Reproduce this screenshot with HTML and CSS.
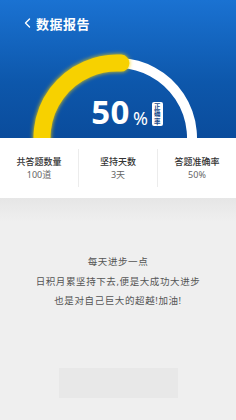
FILE: index.html
```html
<!DOCTYPE html>
<html lang="zh-CN">
<head>
    <meta charset="UTF-8">
    <meta name="viewport" content="width=device-width, initial-scale=1.0">
    <title>数据报告</title>
    <link rel="stylesheet" href="styles.css">
</head>
<body>
    <div class="page">
        <header class="report-header">
            <div class="title-bar">
                <svg class="back" width="7" height="10" viewBox="0 0 7 10">
                    <path d="M5.5 1 L1.5 5 L5.5 9" fill="none" stroke="#fff" stroke-width="1.4" stroke-linecap="round" stroke-linejoin="round"/>
                </svg>
                <h1>数据报告</h1>
            </div>
            <div class="gauge">
                <svg class="gauge-arc" width="236" height="106" viewBox="0 0 236 106">
                    <defs>
                        <filter id="glow" x="-20%" y="-20%" width="140%" height="140%">
                            <feGaussianBlur stdDeviation="2" result="b"/>
                            <feMerge>
                                <feMergeNode in="b"/>
                                <feMergeNode in="SourceGraphic"/>
                            </feMerge>
                        </filter>
                    </defs>
                    <path d="M120.9 31.1 A75 75 0 0 1 187.5 131.6" fill="none" stroke="#ffffff" stroke-width="10"/>
                    <path d="M46.5 131.6 A75 75 0 0 1 120.9 31.1" fill="none" stroke="#f7d100" stroke-width="17" stroke-linecap="round" filter="url(#glow)"/>
                </svg>
                <div class="score">
                    <span class="score-num">50</span>
                    <span class="score-unit">%</span>
                    <span class="score-tag"><span>正</span><span>确</span><span>率</span></span>
                </div>
            </div>
        </header>

        <section class="stats">
            <div class="stat">
                <div class="stat-label">共答题数量</div>
                <div class="stat-value">100道</div>
            </div>
            <div class="stat">
                <div class="stat-label">坚持天数</div>
                <div class="stat-value">3天</div>
            </div>
            <div class="stat">
                <div class="stat-label">答题准确率</div>
                <div class="stat-value">50%</div>
            </div>
        </section>

        <section class="quote">
            <p>每天进步一点</p>
            <p>日积月累坚持下去,便是大成功大进步</p>
            <p>也是对自己巨大的超越!加油!</p>
        </section>

        <div class="faint-button"></div>
    </div>
</body>
</html>
```

FILE: styles.css
```css
* {
    margin: 0;
    padding: 0;
    box-sizing: border-box;
}

body {
    font-family: "Noto Sans", "Noto Sans CJK SC", sans-serif;
    background-color: #efefef;
    color: #333;
}

.page {
    width: 236px;
    min-height: 420px;
    display: flex;
    flex-direction: column;
    background: linear-gradient(#e6e6e6, #efefef 24px) 0 198px / 100% 100% no-repeat, #efefef;
}

.report-header {
    height: 138px;
    overflow: hidden;
    background: linear-gradient(#1a72d2, #0d57ab 60%, #0a4c9c);
    padding-top: 14px;
}

.title-bar {
    height: 18px;
    display: flex;
    align-items: center;
    padding-left: 24px;
    color: #fff;
}

.back {
    display: block;
    margin-right: 5px;
}

.title-bar h1 {
    font-size: 13px;
    font-weight: bold;
    letter-spacing: 0.5px;
}

.gauge {
    position: relative;
    height: 106px;
}

.gauge-arc {
    display: block;
}

.score {
    position: absolute;
    left: 0;
    right: 0;
    bottom: 11px;
    display: flex;
    justify-content: center;
    align-items: flex-end;
    padding-left: 18px;
    color: #fff;
}

.score-num {
    font-family: "Open Sans", sans-serif;
    font-size: 33px;
    font-weight: bold;
    line-height: 30px;
    letter-spacing: 0.5px;
}

.score-unit {
    font-size: 18px;
    line-height: 18px;
    margin-left: 3px;
}

.score-tag {
    margin-left: 4px;
    margin-bottom: 1px;
    width: 11px;
    display: flex;
    flex-direction: column;
    align-items: center;
    background-color: #fff;
    color: #1b4c8a;
    border-radius: 2px;
    font-size: 6.5px;
    line-height: 7.5px;
    padding: 1px 0;
    font-weight: bold;
}

.stats {
    height: 60px;
    display: flex;
    align-items: center;
    background-color: #fff;
}

.stat {
    flex: 1;
    height: 38px;
    display: flex;
    flex-direction: column;
    justify-content: center;
    align-items: center;
    border-left: 1px solid #ececec;
}

.stat:first-child {
    border-left: none;
}

.stat-label {
    font-size: 9px;
    font-weight: 500;
    color: #333;
    line-height: 13px;
}

.stat-value {
    font-size: 9px;
    color: #666;
    line-height: 13px;
}

.quote {
    margin-top: 54px;
    text-align: center;
    color: #555;
    font-size: 9.5px;
    line-height: 19.5px;
    letter-spacing: 0.6px;
}

.faint-button {
    width: 119px;
    height: 30px;
    margin: 57px auto 0;
    background-color: #e8e8e8;
}
```
